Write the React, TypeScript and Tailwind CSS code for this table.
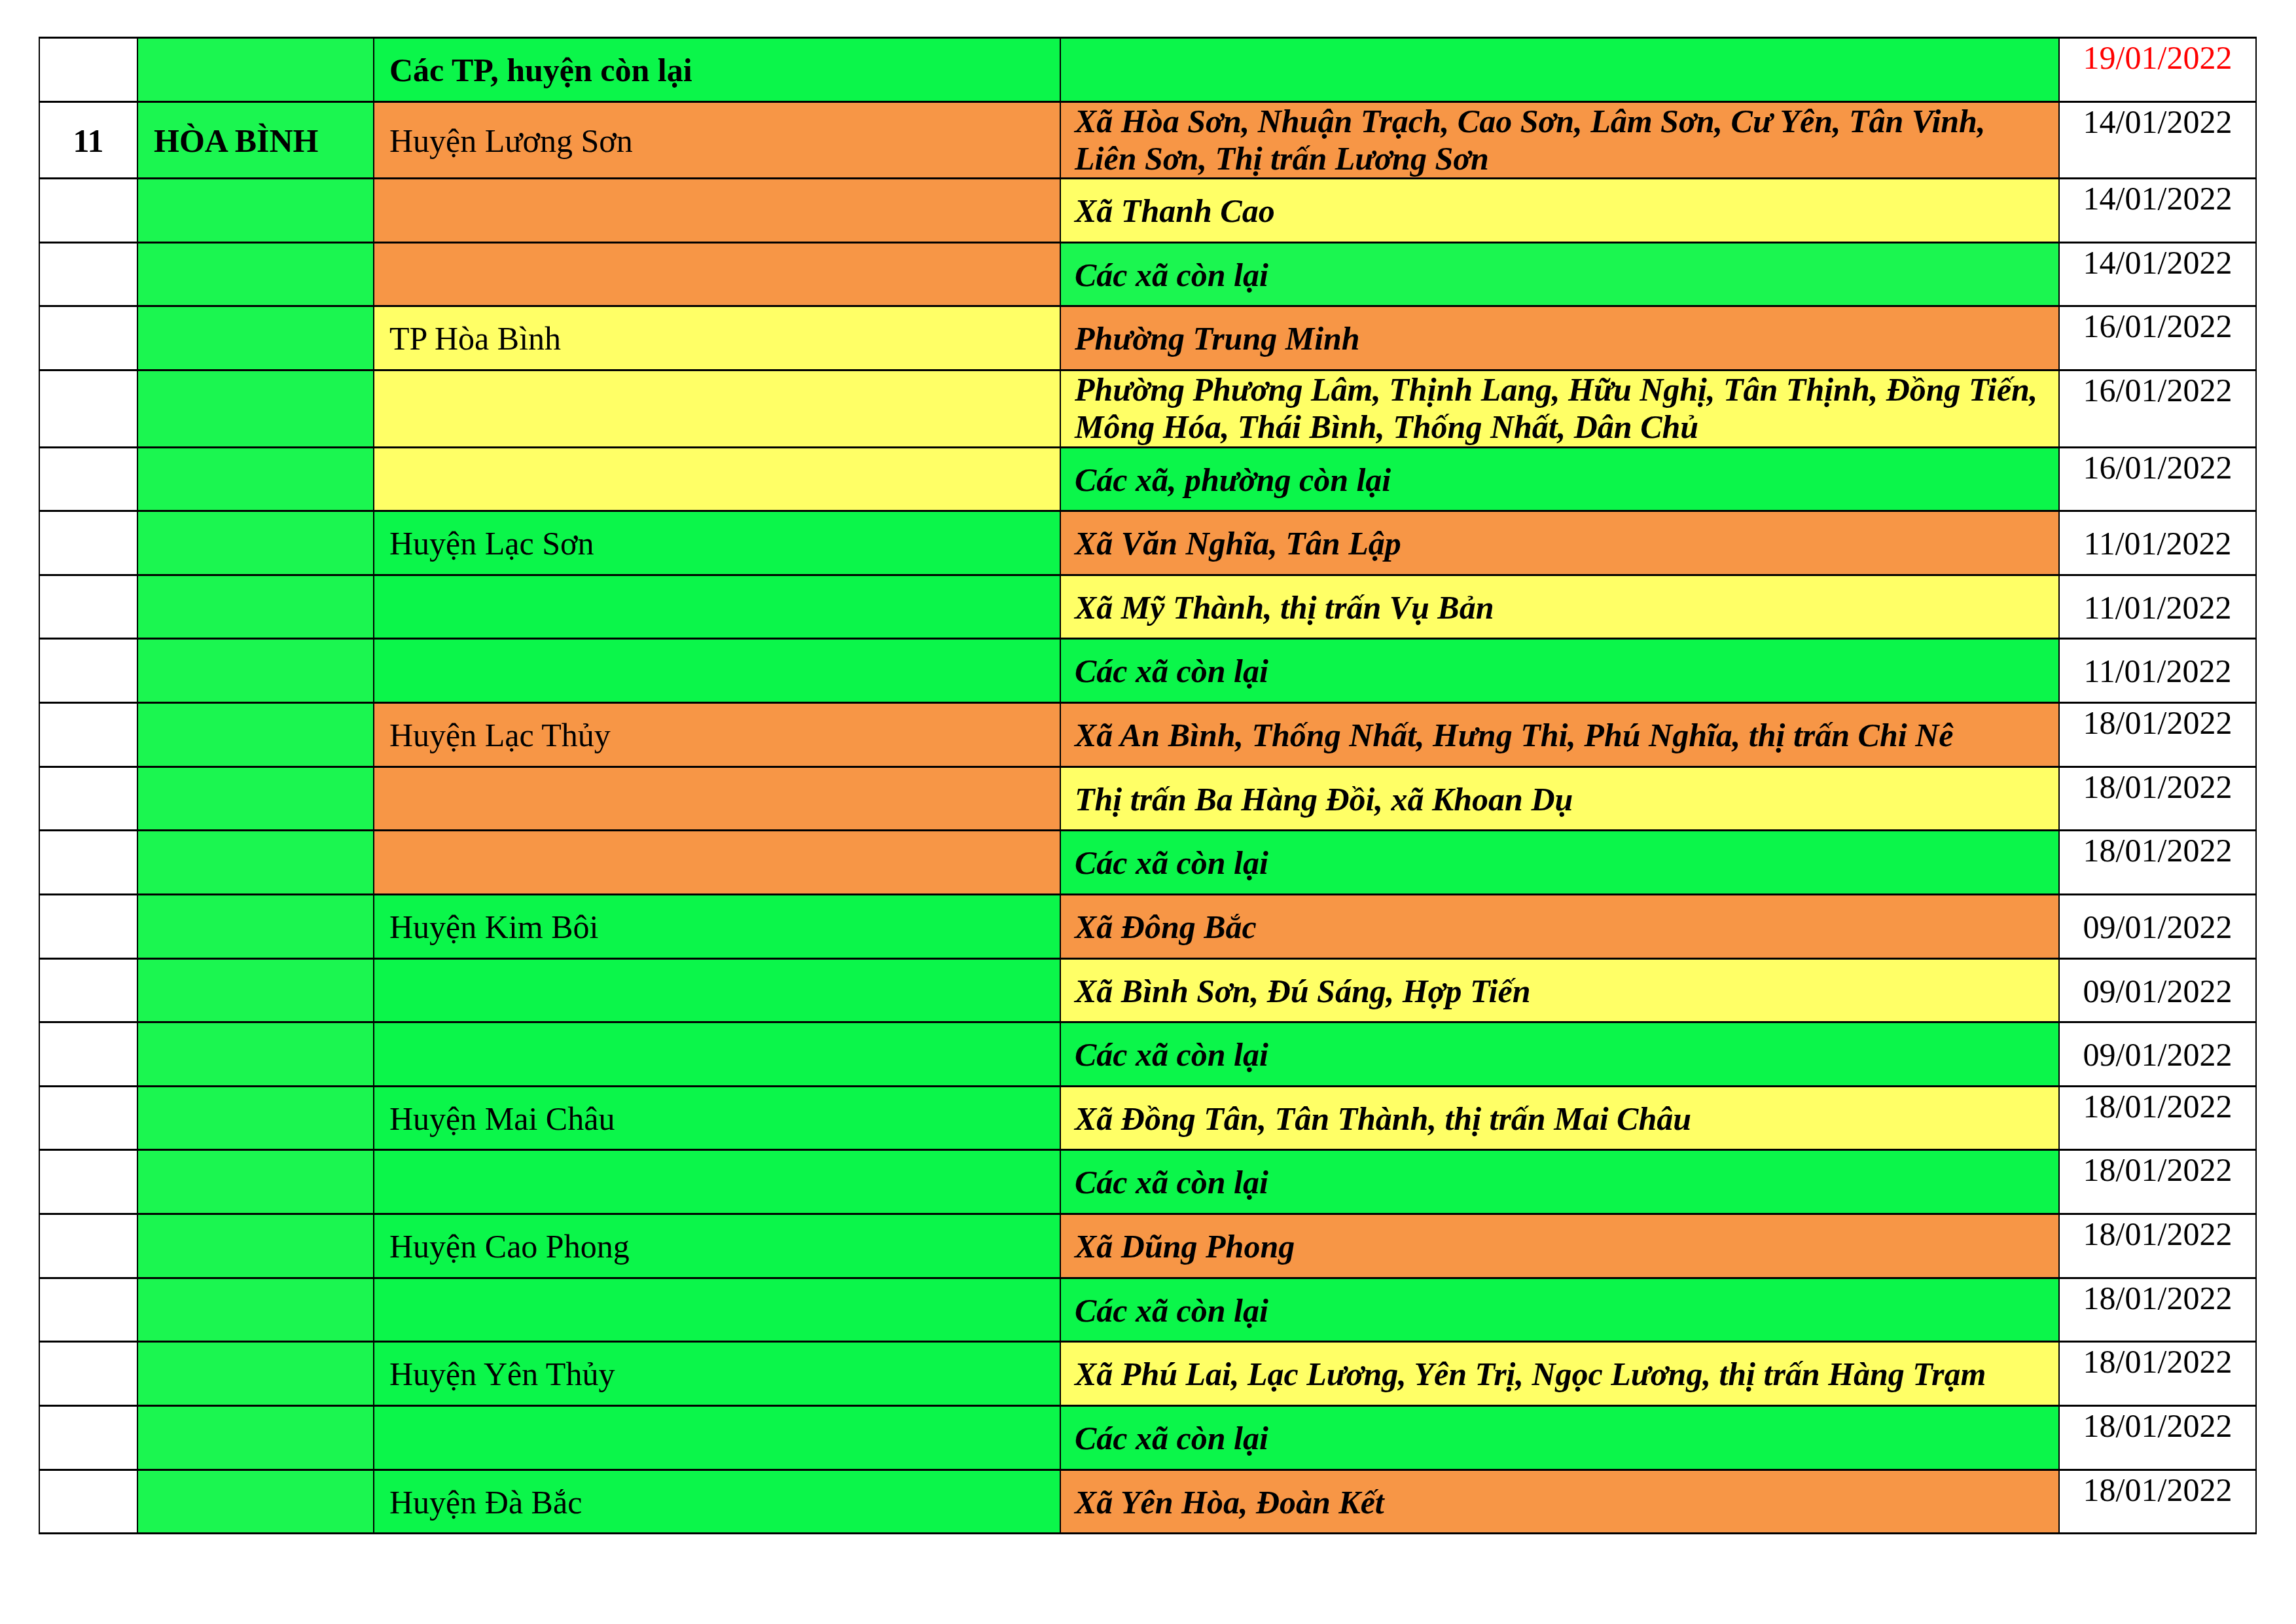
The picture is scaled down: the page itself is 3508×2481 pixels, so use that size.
const G1 = "bg-[#1bf650]";
const G2 = "bg-[#0bf64a]";
const OR = "bg-[#f79646]";
const YE = "bg-[#ffff66]";

type Row = {
  no?: string;
  prov?: string;
  dist?: string;
  distBold?: boolean;
  distBg: string;
  comm: string[];
  commBg: string;
  date: string;
  top: boolean;
  red?: boolean;
  tall?: boolean;
};

const rows: Row[] = [
  { dist: "Các TP, huyện còn lại", distBold: true, distBg: G2, comm: [], commBg: G2, date: "19/01/2022", top: true, red: true },
  {
    no: "11",
    prov: "HÒA BÌNH",
    dist: "Huyện Lương Sơn",
    distBg: OR,
    comm: ["Xã Hòa Sơn, Nhuận Trạch, Cao Sơn, Lâm Sơn, Cư Yên, Tân Vinh,", "Liên Sơn, Thị trấn Lương Sơn"],
    commBg: OR,
    date: "14/01/2022",
    top: true,
    tall: true,
  },
  { distBg: OR, comm: ["Xã Thanh Cao"], commBg: YE, date: "14/01/2022", top: true },
  { distBg: OR, comm: ["Các xã còn lại"], commBg: G1, date: "14/01/2022", top: true },
  { dist: "TP Hòa Bình", distBg: YE, comm: ["Phường Trung Minh"], commBg: OR, date: "16/01/2022", top: true },
  {
    distBg: YE,
    comm: ["Phường Phương Lâm, Thịnh Lang, Hữu Nghị, Tân Thịnh, Đồng Tiến,", "Mông Hóa, Thái Bình, Thống Nhất, Dân Chủ"],
    commBg: YE,
    date: "16/01/2022",
    top: true,
    tall: true,
  },
  { distBg: YE, comm: ["Các xã, phường còn lại"], commBg: G2, date: "16/01/2022", top: true },
  { dist: "Huyện Lạc Sơn", distBg: G2, comm: ["Xã Văn Nghĩa, Tân Lập"], commBg: OR, date: "11/01/2022", top: false },
  { distBg: G2, comm: ["Xã Mỹ Thành, thị trấn Vụ Bản"], commBg: YE, date: "11/01/2022", top: false },
  { distBg: G2, comm: ["Các xã còn lại"], commBg: G2, date: "11/01/2022", top: false },
  { dist: "Huyện Lạc Thủy", distBg: OR, comm: ["Xã An Bình, Thống Nhất, Hưng Thi, Phú Nghĩa, thị trấn Chi Nê"], commBg: OR, date: "18/01/2022", top: true },
  { distBg: OR, comm: ["Thị trấn Ba Hàng Đồi, xã Khoan Dụ"], commBg: YE, date: "18/01/2022", top: true },
  { distBg: OR, comm: ["Các xã còn lại"], commBg: G2, date: "18/01/2022", top: true },
  { dist: "Huyện Kim Bôi", distBg: G2, comm: ["Xã Đông Bắc"], commBg: OR, date: "09/01/2022", top: false },
  { distBg: G2, comm: ["Xã Bình Sơn, Đú Sáng, Hợp Tiến"], commBg: YE, date: "09/01/2022", top: false },
  { distBg: G2, comm: ["Các xã còn lại"], commBg: G2, date: "09/01/2022", top: false },
  { dist: "Huyện Mai Châu", distBg: G2, comm: ["Xã Đồng Tân, Tân Thành, thị trấn Mai Châu"], commBg: YE, date: "18/01/2022", top: true },
  { distBg: G2, comm: ["Các xã còn lại"], commBg: G2, date: "18/01/2022", top: true },
  { dist: "Huyện Cao Phong", distBg: G2, comm: ["Xã Dũng Phong"], commBg: OR, date: "18/01/2022", top: true },
  { distBg: G2, comm: ["Các xã còn lại"], commBg: G2, date: "18/01/2022", top: true },
  { dist: "Huyện Yên Thủy", distBg: G2, comm: ["Xã Phú Lai, Lạc Lương, Yên Trị, Ngọc Lương, thị trấn Hàng Trạm"], commBg: YE, date: "18/01/2022", top: true },
  { distBg: G2, comm: ["Các xã còn lại"], commBg: G2, date: "18/01/2022", top: true },
  { dist: "Huyện Đà Bắc", distBg: G2, comm: ["Xã Yên Hòa, Đoàn Kết"], commBg: OR, date: "18/01/2022", top: true },
];

const App = () => {
  return (
    <div className="w-[3508px] h-[2481px] bg-white pt-[56px] pl-[59px] font-['Liberation_Serif','Times_New_Roman',serif] text-[50px] leading-[1.15] text-black">
      <div className="w-[3389px] flex flex-col gap-y-[3px] bg-black border-x-2 border-y-[3px] border-black">
        {rows.map((r, i) => (
          <div
            key={i}
            className={`grid grid-cols-[148px_359px_1047px_1524px_299px] grid-rows-1 gap-x-[2px] ${r.tall ? "h-[114.5px]" : "h-[94.64px]"}`}
          >
            <div className="bg-white flex items-center justify-center pt-[3px] font-bold">{r.no}</div>
            <div className={`${G1} flex items-center pl-[24px] pt-[3px] font-bold whitespace-nowrap`}>{r.prov}</div>
            <div className={`${r.distBg} flex items-center pl-[23px] pt-[3px] whitespace-nowrap ${r.distBold ? "font-bold" : ""}`}>
              {r.dist}
            </div>
            <div
              className={`${r.commBg} flex flex-col justify-center pl-[21px] ${r.tall ? "leading-[57px]" : "pt-[3px]"} font-bold italic whitespace-nowrap overflow-hidden`}
            >
              {r.comm.map((line, j) => (
                <span key={j}>{line}</span>
              ))}
            </div>
            <div
              className={`bg-white flex justify-center ${r.top ? "items-start pt-px" : "items-center pt-[3px]"} ${r.red ? "text-[#ff0000]" : ""}`}
            >
              {r.date}
            </div>
          </div>
        ))}
      </div>
    </div>
  );
};

export default App;
